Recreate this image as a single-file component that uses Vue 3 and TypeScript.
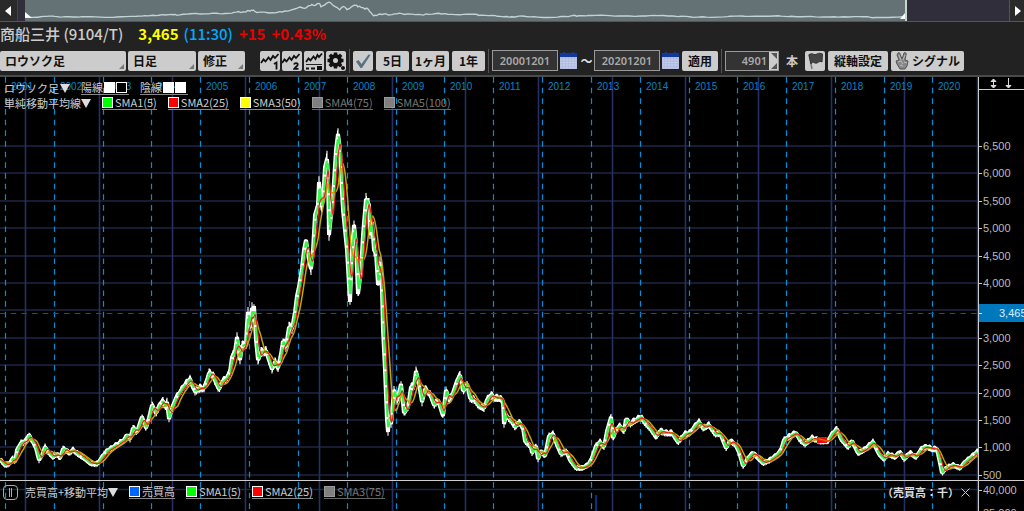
<script setup lang="ts">
import { ref } from 'vue'

type Point = [number, number]

const WIDTH = 978
const TOP = 77
const HEIGHT = 403

const chartStyle = ref('ロウソク足')
const period = ref('日足')
const adjust = ref('修正')
const dateFrom = ref('20001201')
const dateTo = ref('20201201')
const barCount = ref('4901')

const trace =
  '0,459 3,463 5,465 9,464 13,458 15,462 17,450 21,443 24,442 27,439 29,435 31,439 33,442 36,448 39,460 42,455 45,447 49,453 53,457 57,454 60,458 63,449 66,450 69,453 73,450 78,454 84,458 90,463 96,464 98,463 102,457 107,451 112,448 118,444 124,440 127,435 130,439 133,428 137,432 142,417 146,428 149,418 152,405 156,413 160,404 163,401 165,407 167,402 169,419 172,408 176,398 180,392 184,386 190,379 192,385 195,391 200,388 204,388 207,380 209,373 213,375 216,383 219,389 222,382 226,379 230,372 232,357 235,352 237,337 240,360 242,346 246,344 247,325 248,312 250,328 252,308 253,318 254,306 256,340 258,360 261,352 266,351 270,363 272,369 275,362 278,368 281,354 283,341 286,347 289,327 292,329 295,312 297,296 299,287 302,268 304,250 306,240 309,260 311,269 313,250 315,215 318,205 319,182 321,207 323,200 325,167 327,159 328,175 329,235 331,215 333,197 336,150 338,134 340,150 341,175 343,210 345,230 347,250 348,268 350,302 352,250 354,225 356,245 358,294 361,270 363,235 366,199 369,205 370,235 372,222 374,250 376,253 378,285 380,262 382,290 383,330 385,370 387,420 388,432 389,415 391,424 394,390 397,401 401,384 404,413 408,407 411,387 414,386 416,371 419,384 422,402 425,389 430,394 434,405 438,400 443,416 446,390 449,400 453,393 457,381 460,375 463,391 467,384 470,398 475,400 478,405 484,408 487,400 491,395 495,398 500,398 503,402 504,424 506,415 512,422 515,427 519,422 523,428 525,441 531,447 532,453 536,446 538,459 541,451 545,456 549,436 553,434 557,445 561,454 566,451 570,460 576,468 582,468 588,465 592,458 596,446 600,442 604,447 607,431 611,417 613,438 616,430 620,426 624,431 626,419 630,424 634,421 641,417 645,423 650,428 656,437 660,431 666,433 672,433 678,442 685,434 690,433 695,426 699,422 703,428 709,425 715,434 720,433 726,448 730,441 735,444 739,452 743,466 748,458 753,453 758,458 763,463 770,460 777,455 781,450 784,440 790,436 796,433 800,440 805,444 812,438 820,441 828,441 832,434 837,429 841,439 848,447 852,441 858,453 864,450 873,442 879,454 884,459 888,454 895,457 900,452 904,459 910,453 916,457 922,448 927,447 932,449 937,449 940,463 942,473 946,468 953,465 960,468 965,462 970,458 977,452'

const anchors: Point[] = trace.split(' ').map((pair) => {
  const [x, y] = pair.split(',').map(Number)
  return [x, y]
})

function priceAt(x: number): number {
  for (let i = 1; i < anchors.length; i++) {
    const [x1, y1] = anchors[i]
    if (x <= x1) {
      const [x0, y0] = anchors[i - 1]
      return y0 + ((y1 - y0) * (x - x0)) / (x1 - x0)
    }
  }
  return anchors[anchors.length - 1][1]
}

const STEP = 0.5
const closes: Point[] = []
for (let x = 0; x < WIDTH; x += STEP) closes.push([x, priceAt(x)])

function average(span: number): Point[] {
  const size = Math.round(span / STEP)
  return closes.map(([x], i) => {
    const part = closes.slice(Math.max(0, i - size + 1), i + 1)
    return [x, part.reduce((sum, p) => sum + p[1], 0) / part.length]
  })
}

function toPath(points: Point[]): string {
  return 'M' + points.map(([x, y]) => `${x.toFixed(1)} ${y.toFixed(1)}`).join('L')
}

const wicks = closes
  .map(([x, y], i) => {
    const reach = 2 + (475 - y) / 60
    const up = 1 + Math.abs(Math.sin(i * 12.9)) * reach
    const down = 1 + Math.abs(Math.sin(i * 7.3 + 1)) * reach
    return `M${x} ${(y - up).toFixed(1)}V${(y + down).toFixed(1)}`
  })
  .join('')

const closePath = toPath(closes)
const sma1 = toPath(average(1.5))
const sma2 = toPath(average(5))
const sma3 = toPath(average(10))
const overview = toPath(
  anchors.map(([x, y]): Point => [(x * 880) / WIDTH, 2 + ((y - 132) * 15) / 343]),
)

const sessionLines = [25, 99, 172, 245, 319, 392, 465, 538, 612, 685, 758, 831, 904, 977]
const years = [5, 54, 103, 151, 200, 249, 298, 347, 396, 444, 493, 542, 591, 640, 689, 737, 786, 835, 884, 932].map(
  (x, i) => ({ x, label: String(2001 + i) }),
)
const levels = Array.from({ length: 13 }, (_, i) => ({
  y: Math.round(146 + i * 27.4),
  value: 6500 - i * 500,
}))
const axisLabels = levels.filter((l) => l.value !== 3500)

const leftOf = (x: number) => ({ left: `${((x + 6) / WIDTH) * 100}%` })
const topOf = (y: number) => ({ top: `${((y - TOP) / HEIGHT) * 100}%` })

interface Legend {
  label: string
  color: string
  off?: boolean
}
const priceLegend: Legend[] = [
  { label: 'SMA1(5)', color: '#00ff00' },
  { label: 'SMA2(25)', color: '#ff0000' },
  { label: 'SMA3(50)', color: '#ffff00' },
  { label: 'SMA4(75)', color: '#808080', off: true },
  { label: 'SMA5(100)', color: '#808080', off: true },
]
const volumeLegend: Legend[] = [
  { label: '売買高', color: '#0066ff' },
  { label: 'SMA1(5)', color: '#00ff00' },
  { label: 'SMA2(25)', color: '#ff0000' },
  { label: 'SMA3(75)', color: '#808080', off: true },
]
</script>

<template>
  <main class="app">
    <div class="overview">
      <button class="scroll" aria-label="前へ">
        <svg width="6" height="10" viewBox="0 0 6 10"><path d="M6 0V10L0 5Z" fill="#fff" /></svg>
      </button>
      <div class="track">
        <div class="window">
          <svg class="fill" viewBox="0 0 880 20" preserveAspectRatio="none">
            <path :d="overview" fill="none" stroke="#c3d3d3" stroke-width="1.3" />
          </svg>
          <svg class="grip left" width="7" height="7" viewBox="0 0 7 7"><path d="M0 0L7 6H0Z" fill="#fff" /></svg>
          <svg class="grip right" width="5" height="6" viewBox="0 0 5 6"><path d="M5 0V6H0Z" fill="#fff" /></svg>
        </div>
      </div>
      <button class="scroll" aria-label="次へ">
        <svg width="6" height="10" viewBox="0 0 6 10"><path d="M0 0V10L6 5Z" fill="#fff" /></svg>
      </button>
    </div>

    <h1 class="quote">
      <span class="name">商船三井 (9104/T)</span>
      <span class="last">3,465</span>
      <span class="time">(11:30)</span>
      <span class="change">+15</span>
      <span class="change">+0.43%</span>
    </h1>

    <div class="toolbar">
      <div class="group">
        <span class="drop wide"><select v-model="chartStyle" aria-label="チャート種類"><option>ロウソク足</option></select></span>
        <span class="drop mid"><select v-model="period" aria-label="足種"><option>日足</option></select></span>
        <span class="drop narrow"><select v-model="adjust" aria-label="株価修正"><option>修正</option></select></span>
      </div>
      <div class="group icons">
        <button class="btn icon" aria-label="テクニカル1">
          <svg width="20" height="20" viewBox="0 0 20 20">
            <path d="M1 12L3.500 8.500L5.500 10.500L8.500 6.500L10.500 9L13 5L15 7L18.500 3" class="ink" />
            <path d="M14 13L16.500 11.500V18.500" class="ink" />
          </svg>
        </button>
        <button class="btn icon" aria-label="テクニカル2">
          <svg width="20" height="20" viewBox="0 0 20 20">
            <path d="M0 12L2.500 8.500L4.500 10.500L7.500 6.500L9.500 9L12 5L14 7L17.500 3" class="ink" />
            <path d="M12 13.500C12.500 11.500 16 11.500 15.700 13.800C15.500 15 13 16.500 12.300 17.800H16.500" class="ink" />
          </svg>
        </button>
        <button class="btn icon" aria-label="表示切替">
          <svg width="20" height="20" viewBox="0 0 20 20">
            <path d="M2 11L4.500 7.500L6.500 9.500L9.500 5.500L11.500 8L13.500 4L15 6L18 2.500" class="ink" />
            <path d="M2 13.500H18" stroke="#222" />
            <path d="M2 17.500H5M7 17.500H11" stroke="#111" stroke-width="2" />
            <path d="M13 17H18" stroke="#111" stroke-width="4" />
          </svg>
        </button>
        <button class="btn icon" aria-label="設定">
          <svg width="20" height="20" viewBox="0 0 20 20">
            <circle cx="9.500" cy="9.500" r="4.500" fill="none" stroke="#111" stroke-width="4" />
            <path d="M9.500 1.500V5M9.500 14V17.500M1.500 9.500H5M14 9.500H17.500M3.800 3.800L6.500 6.500M12.500 12.500L15.200 15.200M15.200 3.800L12.500 6.500M6.500 12.500L3.800 15.200" stroke="#111" stroke-width="3.500" />
            <circle cx="17" cy="17" r="2" fill="#111" />
          </svg>
        </button>
      </div>
      <i class="sep"></i>
      <div class="group">
        <button class="btn icon" aria-label="確定">
          <svg width="20" height="20" viewBox="0 0 20 20"><path d="M3 10.500L5.500 9L8.500 13L15.500 3.500L17.500 4L9 17H7.500Z" fill="#567183" /></svg>
        </button>
        <button class="btn range">5日</button>
        <button class="btn month">1ヶ月</button>
        <button class="btn range">1年</button>
      </div>
      <i class="sep"></i>
      <div class="dates">
        <input v-model="dateFrom" class="field" aria-label="開始日" />
        <button class="cal" aria-label="開始日カレンダー">
          <svg width="17" height="17" viewBox="0 0 17 17">
            <path d="M0 1H17V17H0Z" fill="#a9b5dd" /><path d="M0 1H17V5H0ZM3 0H5V2H3ZM12 0H14V2H12Z" fill="#12389c" />
            <path d="M1 5V16H16V5M1 8H16M1 10.500H16M1 13H16M4 5V16M7 5V16M10 5V16M13 5V16" fill="none" stroke="#c3cdec" />
          </svg>
        </button>
        <span class="tilde">～</span>
        <input v-model="dateTo" class="field" aria-label="終了日" />
        <button class="cal" aria-label="終了日カレンダー">
          <svg width="17" height="17" viewBox="0 0 17 17">
            <path d="M0 1H17V17H0Z" fill="#a9b5dd" /><path d="M0 1H17V5H0ZM3 0H5V2H3ZM12 0H14V2H12Z" fill="#12389c" />
            <path d="M1 5V16H16V5M1 8H16M1 10.500H16M1 13H16M4 5V16M7 5V16M10 5V16M13 5V16" fill="none" stroke="#c3cdec" />
          </svg>
        </button>
        <button class="btn apply">適用</button>
      </div>
      <i class="sep"></i>
      <label class="count">
        <span class="spin">
          <input v-model="barCount" />
          <svg width="9" height="18" viewBox="0 0 9 18"><path d="M0 0H9V18H0Z" fill="#ccc" /><path d="M2 1H8V7ZM2 17H8V11Z" fill="#555" /></svg>
        </span>
        本
      </label>
      <div class="group">
        <button class="btn icon" aria-label="フラグ">
          <svg width="20" height="20" viewBox="0 0 20 20">
            <path d="M4 3L7 18" stroke="#777" stroke-width="1.500" />
            <path d="M4 4C7 1 9 5 12 3C14 2 15 2 17.500 3L17 11C14 9 13 13 10 12C8 11 7 11 6 13Z" fill="#444" stroke="#333" />
          </svg>
        </button>
        <button class="btn axis-btn">縦軸設定</button>
        <button class="btn signal">
          <svg width="15" height="18" viewBox="0 0 15 18">
            <path d="M3 1C4 0 5 1 5 2L7 7L9 1C10 0 12 1 11 3L10 8L13 9L12 14L10 17H5L2 12L1 9L4 8L2 3Z" fill="#888" stroke="#555" />
            <path d="M4 3L6 8M10 3L8 8M3 10L6 9L8 12M9 10L12 11M5 13L8 14" fill="none" stroke="#bbb" />
          </svg>
          シグナル
        </button>
      </div>
    </div>

    <section class="pane price">
      <div class="plot">
        <svg class="fill" :viewBox="`0 ${TOP} ${WIDTH} ${HEIGHT}`" preserveAspectRatio="none">
          <path v-for="l in levels" :key="l.value" :d="`M0 ${l.y}H${WIDTH}`" stroke="#1e2644" stroke-width="1.600" />
          <path v-for="x in sessionLines" :key="x" :d="`M${x + 0.5} ${TOP}V480`" stroke="#262f66" stroke-width="1.600" />
          <path v-for="y in years" :key="y.label" :d="`M${y.x + 0.5} ${TOP}V480`" stroke="#0090d8" stroke-width="1.200" stroke-dasharray="5.670 5" />
          <path :d="`M0 313.5H${WIDTH}`" stroke="#105478" stroke-dasharray="5.670 5" />
          <path :d="wicks" stroke="#fff" stroke-width="1.100" />
          <path :d="closePath" fill="none" stroke="#fff" stroke-width="4" stroke-linejoin="bevel" />
          <path :d="sma1" fill="none" stroke="#35f548" stroke-width="2.200" stroke-linejoin="bevel" stroke-dasharray="14 2" />
          <path d="M817 437H827V443H817Z" fill="#ff0000" />
          <path :d="sma3" fill="none" stroke="#c0a800" stroke-width="1.500" />
          <path :d="sma2" fill="none" stroke="#e82020" stroke-width="1.200" />
        </svg>
        <span v-for="y in years" :key="y.label" class="year" :style="leftOf(y.x)">{{ y.label }}</span>
        <div class="legends">
          <div class="legend">
            <button class="menu style-menu">ロウソク足<svg width="10" height="9" viewBox="0 0 10 9"><path d="M0 0H10L5 9Z" /></svg></button>
            <button class="item candle">陽線<i class="box on"></i><i class="box"></i></button>
            <button class="item candle">陰線<i class="box on"></i><i class="box on"></i></button>
          </div>
          <div class="legend">
            <button class="menu">単純移動平均線<svg width="10" height="9" viewBox="0 0 10 9"><path d="M0 0H10L5 9Z" /></svg></button>
            <button v-for="s in priceLegend" :key="s.label" class="item" :class="{ off: s.off }">
              <i class="swatch" :style="{ background: s.color }"></i>{{ s.label }}
            </button>
          </div>
        </div>
      </div>
      <div class="axis">
        <div class="scale">
          <svg width="30" height="11" viewBox="0 0 30 11" aria-hidden="true">
            <path d="M6.500 1V10M4 3.500L6.500 1L9 3.500ZM4 7.500L6.500 10L9 7.500ZM21.500 0V10M19 7.500L21.500 10L24 7.500Z" stroke="#ddd" fill="#ddd" />
          </svg>
        </div>
        <span v-for="l in axisLabels" :key="l.value" class="tick" :style="topOf(l.y)">{{ l.value.toLocaleString('en-US') }}</span>
        <span class="tag" :style="topOf(313)">3,465</span>
      </div>
    </section>

    <section class="pane volume">
      <div class="plot">
        <svg class="fill" :viewBox="`0 0 ${WIDTH} 30`" preserveAspectRatio="none">
          <path :d="`M0 8.500H${WIDTH}`" stroke="#1e2644" stroke-width="1.600" />
          <path v-for="x in sessionLines" :key="x" :d="`M${x + 0.5} 0V30`" stroke="#262f66" stroke-width="1.600" />
          <path v-for="y in years" :key="y.label" :d="`M${y.x + 0.5} 1V30`" stroke="#0090d8" stroke-width="1.200" stroke-dasharray="5.670 5" />
          <path d="M596 14V30" stroke="#0044aa" stroke-width="1.500" />
        </svg>
        <div class="volume-bar">
          <button class="handle" aria-label="高さ変更"></button>
          <button class="menu">売買高+移動平均<svg width="10" height="9" viewBox="0 0 10 9"><path d="M0 0H10L5 9Z" /></svg></button>
          <button v-for="s in volumeLegend" :key="s.label" class="item" :class="{ off: s.off }">
            <i class="swatch" :style="{ background: s.color }"></i>{{ s.label }}
          </button>
          <strong class="unit">（売買高：千）</strong>
          <button class="close" aria-label="閉じる">
            <svg width="9" height="9" viewBox="0 0 9 9"><path d="M0.500 0.500L8.500 8.500M8.500 0.500L0.500 8.500" stroke="#ccc" /></svg>
          </button>
        </div>
      </div>
      <div class="axis">
        <span class="tick first">40,000</span>
        <span class="tick second">35,000</span>
      </div>
    </section>
  </main>
</template>

<style>
body {
  margin: 0;
  background: #000;
}
</style>

<style scoped>
.app {
  display: flex;
  flex-direction: column;
  height: 100vh;
  overflow: hidden;
  background: #222;
  color: #ccc;
  font-family: 'Noto Sans CJK JP', sans-serif;
}
.app * {
  box-sizing: border-box;
}
button,
input,
select {
  margin: 0;
  padding: 0;
  border: 0;
  font: inherit;
  color: inherit;
  background: none;
}
svg {
  display: block;
  flex: none;
}
.fill {
  position: absolute;
  inset: 0;
  width: 100%;
  height: 100%;
}
.overview {
  display: flex;
  height: 22px;
  flex: none;
  border-bottom: 1px solid #555;
}
.scroll {
  width: 18px;
  display: flex;
  align-items: center;
  padding-left: 5px;
  background: #2a2a2a;
  border-right: 1px solid #444;
}
.scroll:last-child {
  width: 15px;
  border-right: 0;
  border-left: 1px solid #555;
}
.track {
  flex: 1;
  padding-left: 7px;
  padding-right: 10%;
  background: #302e3a;
}
.window {
  position: relative;
  height: 100%;
  background: #647175;
  border-right: 2px solid #c5d5d0;
}
.grip {
  position: absolute;
  bottom: 2px;
}
.left {
  left: 0;
}
.right {
  right: 0;
}
.quote {
  display: flex;
  gap: 6px;
  height: 25px;
  flex: none;
  margin: 0;
  font-size: 15px;
  line-height: 24px;
  font-weight: 500;
  white-space: nowrap;
}
.name {
  margin-right: 9px;
}
.last {
  color: #ff0;
  font-weight: 700;
  margin-right: -1px;
}
.time {
  color: #00aaff;
}
.change {
  color: #e80000;
  font-weight: 700;
}
.toolbar {
  display: flex;
  align-items: center;
  height: 30px;
  flex: none;
  padding-bottom: 1px;
  border-bottom: 2px solid #4a4a4a;
  font-size: 12px;
  font-weight: 700;
  white-space: nowrap;
}
.group {
  display: flex;
  gap: 3px;
}
.group:first-child {
  gap: 2px;
}
.icons {
  margin-left: 15px;
  gap: 2px;
}
.drop {
  position: relative;
  height: 20px;
}
.drop::after {
  content: '';
  position: absolute;
  right: 2px;
  bottom: 2px;
  border-left: 5px solid transparent;
  border-bottom: 5px solid #777;
}
.drop select {
  width: 100%;
  height: 20px;
  padding: 0 0 0 5px;
  appearance: none;
  border-radius: 2px;
  background: #ccc;
  color: #111;
}
.wide {
  width: 126px;
}
.mid {
  width: 68px;
}
.narrow {
  width: 47px;
}
.btn {
  display: flex;
  align-items: center;
  justify-content: center;
  height: 20px;
  border-radius: 2px;
  background: #ccc;
  color: #111;
  line-height: 20px;
}
.icon {
  width: 20px;
}
.ink {
  fill: none;
  stroke: #111;
  stroke-width: 1.8;
}
.range {
  width: 33px;
}
.month {
  width: 37px;
}
.apply {
  width: 36px;
  margin-left: 1px;
}
.axis-btn {
  width: 60px;
}
.signal {
  width: 73px;
  gap: 2px;
}
.sep {
  width: 1px;
  height: 24px;
  margin: 0 3px;
  background: #555;
}
.dates {
  display: flex;
  align-items: center;
}
.field {
  width: 66px;
  height: 21px;
  border: 1px solid #999;
  background: #333;
  color: #aaa;
  text-align: center;
  font-family: 'Noto Sans', sans-serif;
  font-size: 11px;
  font-weight: 600;
}
.cal {
  margin: 0 2px;
}
.tilde {
  width: 15px;
  text-align: center;
  color: #ddd;
}
.count {
  display: flex;
  align-items: center;
  gap: 7px;
  margin-right: 7px;
}
.spin {
  display: flex;
  align-items: center;
  width: 54px;
  height: 20px;
  border: 1px solid #999;
  background: #333;
}
.spin input {
  flex: 1;
  min-width: 0;
  padding-right: 2px;
  text-align: right;
  color: #aaa;
  font-family: 'Noto Sans', sans-serif;
  font-size: 11px;
  font-weight: 600;
}
.pane {
  display: flex;
  background: #000;
}
.price {
  flex: 1;
  min-height: 0;
}
.volume {
  height: 31px;
  flex: none;
  border-top: 1px solid #d0cccd;
}
.plot {
  position: relative;
  flex: 1;
  overflow: hidden;
}
.axis {
  position: relative;
  width: 46px;
  flex: none;
  border-left: 1px solid #ccc;
  overflow: hidden;
  font-family: 'Liberation Sans', Arial, sans-serif;
  font-size: 11px;
}
.scale {
  height: 13px;
  padding: 1px 0 0 8px;
  border-bottom: 1px solid #ccc;
}
.tick {
  position: absolute;
  left: 0;
  line-height: 14px;
  margin-top: -7px;
  padding-left: 4px;
  color: #bbb;
}
.tick::before {
  content: '';
  position: absolute;
  left: 0;
  top: 7px;
  width: 3px;
  height: 1px;
  background: #ccc;
}
.first {
  top: 9px;
}
.second {
  top: 32px;
}
.tag {
  position: absolute;
  left: -1px;
  width: 50px;
  height: 18px;
  margin-top: -9px;
  padding-left: 21px;
  line-height: 18px;
  background: #0078be;
  color: #ddeef8;
}
.tag::before {
  content: '';
  position: absolute;
  left: 0;
  top: 9px;
  width: 4px;
  height: 1px;
  background: #cde;
}
.year {
  position: absolute;
  top: 3px;
  line-height: 14px;
  font-family: 'Liberation Sans', Arial, sans-serif;
  font-size: 10px;
  color: #0086c8;
}
.legends {
  position: absolute;
  left: 4px;
  top: 4px;
}
.legend {
  display: flex;
  gap: 11px;
  height: 15px;
  font-size: 11px;
  line-height: 13px;
  white-space: nowrap;
}
.menu,
.item {
  display: flex;
  align-items: center;
  height: 14px;
  gap: 2px;
  line-height: 13px;
  font-size: 11px;
}
.menu {
  gap: 0;
}
.menu svg {
  fill: #ddd;
}
.style-menu {
  gap: 1px;
}
.item {
  border-bottom: 1px solid #888;
}
.off {
  color: #777;
  border-color: #666;
}
.box,
.swatch {
  width: 11px;
  height: 11px;
  border: 1px solid #fff;
  background: #000;
}
.off .swatch {
  border-color: #999;
}
.on {
  background: #fff;
}
.candle {
  gap: 1px;
  padding-right: 2px;
}
.volume-bar {
  position: absolute;
  left: 3px;
  right: 8px;
  top: 1px;
  display: flex;
  align-items: center;
  gap: 11px;
  height: 20px;
}
.handle {
  width: 15px;
  height: 15px;
  margin-right: -4px;
  padding: 2px 5px;
  border: 1px solid #aaa;
  border-radius: 4px;
  background: linear-gradient(90deg, #aaa 1px, transparent 1px 2px, #aaa 2px) content-box;
}
.unit {
  margin-left: auto;
  margin-right: -9px;
  font-size: 11px;
  line-height: 16px;
  color: #ddd;
}
</style>
